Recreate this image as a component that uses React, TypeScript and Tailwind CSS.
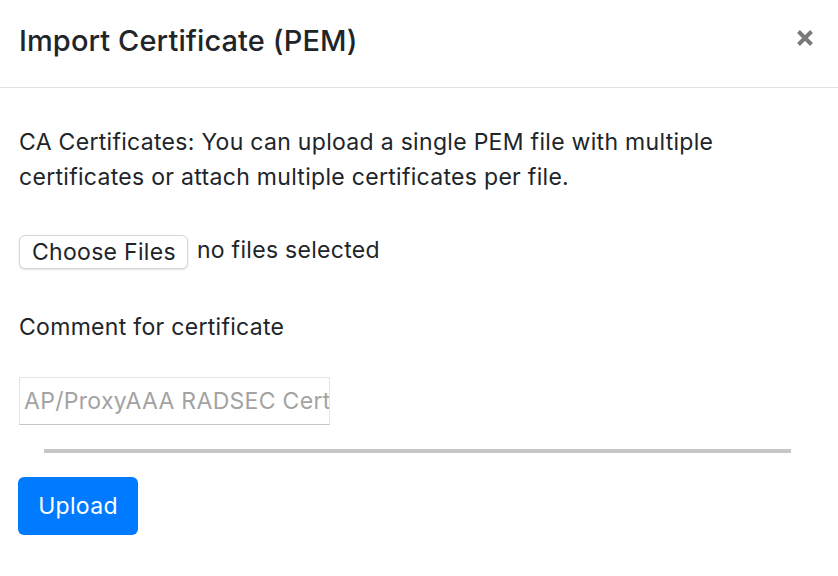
import React from "react";

export default function App() {
  return (
    <div className="w-[838px] h-[576px] bg-white text-[#212529] overflow-hidden" style={{ fontFamily: "Inter, 'Liberation Sans', sans-serif" }}>
      <div className="h-[88px] border-b border-[#dee2e6] flex items-center justify-between pl-[19px] pr-[24px]">
        <h5 className="text-[29px] font-medium leading-[1.2] mt-[-5px] tracking-[0.1px]">Import Certificate (PEM)</h5>
        <button className="w-[18px] h-[18px] mt-[-12px]" aria-label="Close">
          <svg viewBox="0 0 18 18" width="18" height="18">
            <path d="M2.5 2.5 L15.5 15.5 M15.5 2.5 L2.5 15.5" stroke="#7a7a7a" strokeWidth="4" strokeLinecap="butt" />
          </svg>
        </button>
      </div>
      <div className="pl-[19px] pr-[19px] pt-[37px] text-[23px] leading-[35px] tracking-[0.3px]">
        <p>CA Certificates: You can upload a single PEM file with multiple certificates or attach multiple certificates per file.</p>
        <div className="mt-[40px] flex items-center h-[34px]">
          <button className="h-[34px] pl-[12px] pr-[11px] rounded-[6px] border border-[#d6d6d6] bg-white shadow-[0_1px_2px_rgba(0,0,0,0.12)] text-[23px] leading-none tracking-[0.3px]">Choose Files</button>
          <span className="ml-[9px] mt-[-3px]">no files selected</span>
        </div>
        <div className="mt-[41px]">Comment for certificate</div>
        <div className="mt-[32px]">
          <input
            className="w-[311px] h-[48px] border border-[#e3e3e3] border-b-[#c8c8c8] pl-[4px] text-[23px] tracking-[0.3px] placeholder:text-[#a3a3a3] outline-none"
            placeholder="AP/ProxyAAA RADSEC Cert"
          />
        </div>
        <hr className="ml-[25px] mr-[28px] mt-[24px] border-0 h-[4px] bg-[#c6c6c6]" />
        <button className="mt-[24px] ml-[-1px] w-[120px] h-[58px] rounded-[6px] bg-[#007bff] text-white text-[23px] tracking-[0.3px]">Upload</button>
      </div>
    </div>
  );
}
